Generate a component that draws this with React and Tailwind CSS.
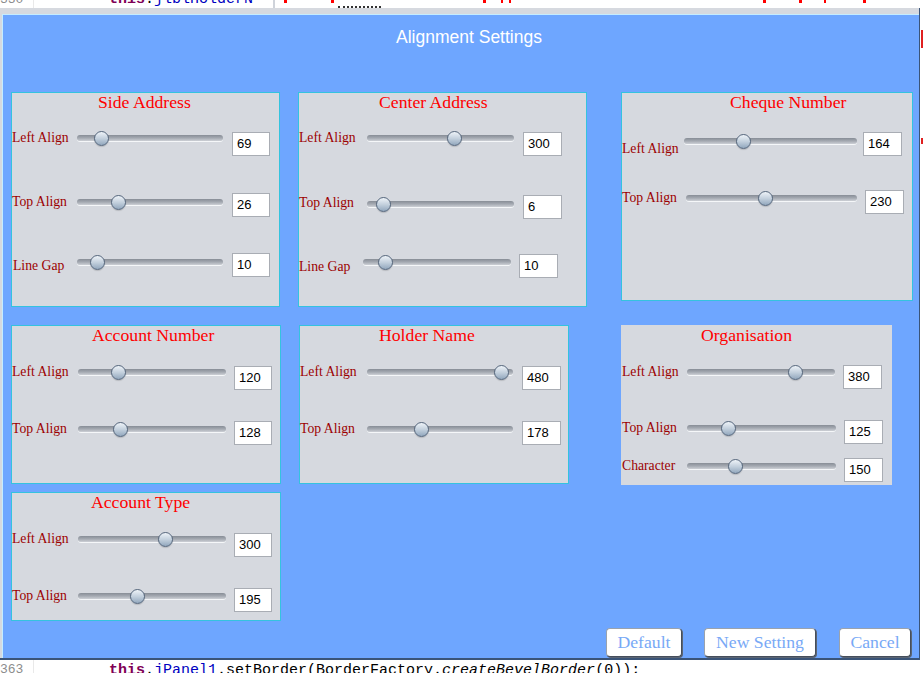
import React from "react";

const SERIF = "font-['Liberation_Serif',serif]";
const MONO = "font-['Liberation_Mono',monospace]";

const panels = {
  side: {
    title: "Side Address",
    cls: "w-[269px] h-[215px] border-[#34c3df]",
    tpl: "pl-[86px]",
    rows: [
      { label: "Left Align", value: "69", mt: "mt-[18px]", lw: "w-[65px]", lmt: "mt-0", sw: "w-[146px]", smt: "mt-0", c: 24.7, bml: "ml-[9px]", bw: "w-[38px]", bmt: "mt-[2px]" },
      { label: "Top Align", value: "26", mt: "mt-[37px]", lw: "w-[65px]", lmt: "mt-[1px]", sw: "w-[146px]", smt: "mt-[1px]", c: 41, bml: "ml-[9px]", bw: "w-[38px]", bmt: "mt-0" },
      { label: "Line Gap", value: "10", mt: "mt-[36px]", lw: "w-[65px] pl-[1px]", lmt: "mt-[5px]", sw: "w-[146px]", smt: "mt-[1px]", c: 20, bml: "ml-[9px]", bw: "w-[38px]", bmt: "mt-0" },
    ],
  },
  center: {
    title: "Center Address",
    cls: "w-[289px] h-[215px] border-[#34c3df]",
    tpl: "pl-[80px]",
    rows: [
      { label: "Left Align", value: "300", mt: "mt-[18px]", lw: "w-[68px]", lmt: "mt-0", sw: "w-[147px]", smt: "mt-0", c: 87, bml: "ml-[9px]", bw: "w-[39px]", bmt: "mt-[2px]" },
      { label: "Top Align", value: "6", mt: "mt-[39px]", lw: "w-[68px]", lmt: "mt-0", sw: "w-[147px]", smt: "mt-[1px]", c: 16, bml: "ml-[9px]", bw: "w-[39px]", bmt: "mt-0" },
      { label: "Line Gap", value: "10", mt: "mt-[35px]", lw: "w-[64px]", lmt: "mt-[5px]", sw: "w-[148px]", smt: "mt-0", c: 22, bml: "ml-[8px]", bw: "w-[39px]", bmt: "mt-0" },
    ],
  },
  cheque: {
    title: "Cheque Number",
    cls: "w-[292px] h-[209px] border-[#34c3df]",
    tpl: "pl-[108px]",
    rows: [
      { label: "Left Align", value: "164", mt: "mt-[20px]", lw: "w-[62px]", lmt: "mt-[9px]", sw: "w-[173px]", smt: "mt-[1px]", c: 59, bml: "ml-[6px]", bw: "w-[39px]", bmt: "mt-0" },
      { label: "Top Align", value: "230", mt: "mt-[33px]", lw: "w-[64px]", lmt: "mt-0", sw: "w-[171px]", smt: "mt-0", c: 79.7, bml: "ml-[8px]", bw: "w-[39px]", bmt: "mt-0" },
    ],
  },
  account: {
    title: "Account Number",
    cls: "w-[270px] h-[159px] border-[#34c3df]",
    tpl: "pl-[80px]",
    rows: [
      { label: "Left Align", value: "120", mt: "mt-[19px]", lw: "w-[66px]", lmt: "mt-0", sw: "w-[148px]", smt: "mt-0", c: 40.7, bml: "ml-[8px]", bw: "w-[38px]", bmt: "mt-[2px]" },
      { label: "Top Align", value: "128", mt: "mt-[31px]", lw: "w-[66px]", lmt: "mt-0", sw: "w-[148px]", smt: "mt-0", c: 42, bml: "ml-[8px]", bw: "w-[38px]", bmt: "mt-0" },
    ],
  },
  holder: {
    title: "Holder Name",
    cls: "w-[270px] h-[159px] ml-[1px] border-[#34c3df]",
    tpl: "pl-[79px]",
    rows: [
      { label: "Left Align", value: "480", mt: "mt-[19px]", lw: "w-[67px]", lmt: "mt-0", sw: "w-[146px]", smt: "mt-0", c: 134, bml: "ml-[9px]", bw: "w-[39px]", bmt: "mt-[2px]" },
      { label: "Top Align", value: "178", mt: "mt-[31px]", lw: "w-[67px]", lmt: "mt-0", sw: "w-[146px]", smt: "mt-0", c: 54.7, bml: "ml-[9px]", bw: "w-[39px]", bmt: "mt-0" },
    ],
  },
  org: {
    title: "Organisation",
    cls: "w-[271px] h-[160px] border-[#d6d9df]",
    tpl: "pl-[79px]",
    rows: [
      { label: "Left Align", value: "380", mt: "mt-[19px]", lw: "w-[65px]", lmt: "mt-0", sw: "w-[148px]", smt: "mt-0", c: 108, bml: "ml-[8px]", bw: "w-[39px]", bmt: "mt-[1px]" },
      { label: "Top Align", value: "125", mt: "mt-[31px]", lw: "w-[65px]", lmt: "mt-0", sw: "w-[149px]", smt: "mt-0", c: 41, bml: "ml-[8px]", bw: "w-[39px]", bmt: "mt-0" },
      { label: "Character", value: "150", mt: "mt-[14px]", lw: "w-[65px]", lmt: "mt-0", sw: "w-[149px]", smt: "mt-0", c: 48, bml: "ml-[8px]", bw: "w-[39px]", bmt: "mt-0" },
    ],
  },
  type: {
    title: "Account Type",
    cls: "w-[270px] h-[129px] border-[#34c3df]",
    tpl: "pl-[79px]",
    rows: [
      { label: "Left Align", value: "300", mt: "mt-[19px]", lw: "w-[66px]", lmt: "mt-0", sw: "w-[148px]", smt: "mt-0", c: 87.7, bml: "ml-[8px]", bw: "w-[38px]", bmt: "mt-[2px]" },
      { label: "Top Align", value: "195", mt: "mt-[31px]", lw: "w-[66px]", lmt: "mt-0", sw: "w-[148px]", smt: "mt-0", c: 59, bml: "ml-[8px]", bw: "w-[38px]", bmt: "mt-0" },
    ],
  },
};

function Slider({ w, mt, c }) {
  return (
    <div className={`relative h-[16px] shrink-0 ${w} ${mt}`}>
      <div className="absolute left-0 right-0 top-[5px] h-[6px] rounded-full bg-linear-to-b from-[#878d96] via-[#a4a9b1] to-[#cdd0d6] shadow-[0_1px_0_#f5f7f9]" />
      <div
        className="absolute top-[0.5px] h-[15px] w-[15px] rounded-full border border-[#55667c] bg-linear-to-b from-[#eef3f8] via-[#c3d0dd] to-[#93a8be] shadow-[0_1px_1px_rgba(0,0,0,0.15)]"
        style={{ left: c - 7.5 }}
      />
    </div>
  );
}

function Row({ r }) {
  return (
    <div className={`flex items-start ${r.mt}`}>
      <div className={`${r.lw} ${r.lmt} shrink-0 whitespace-nowrap text-[13.7px] leading-[16px] text-[#9c0000] ${SERIF}`}>
        {r.label}
      </div>
      <Slider w={r.sw} mt={r.smt} c={r.c} />
      <div
        className={`${r.bml} ${r.bw} ${r.bmt} flex h-[24px] shrink-0 items-center border border-[#a9adb4] bg-white pl-[4px] text-[13px] text-black font-['Liberation_Sans',sans-serif]`}
      >
        {r.value}
      </div>
    </div>
  );
}

function Panel({ p, extra = "" }) {
  return (
    <div className={`flex shrink-0 flex-col border bg-[#d6d9df] ${p.cls} ${extra}`}>
      <div className={`h-[19px] whitespace-nowrap text-[17.7px] leading-[19px] text-[#ff0000] ${SERIF} ${p.tpl}`}>
        {p.title}
      </div>
      {p.rows.map((r, i) => (
        <Row key={i} r={r} />
      ))}
    </div>
  );
}

function Btn({ children, cls }) {
  return (
    <div
      className={`flex h-[29px] items-center justify-center rounded-[4px] border border-[#9aa2ad] border-b-[#454e5c] border-r-[#454e5c] bg-white text-[17.7px] text-[#78a9f6] shadow-[1px_1px_0_#5b6573] ${SERIF} ${cls}`}
    >
      {children}
    </div>
  );
}

export default function App() {
  return (
    <div className="flex h-[673px] w-[923px] flex-col overflow-hidden bg-white">
      {/* IDE top strip (clipped code) */}
      <div className="flex h-[8px] shrink-0 overflow-hidden bg-white">
        <div className="w-[34px] shrink-0 border-r border-[#e9e9e9]">
          <div className={`-mt-[9px] text-[13px] leading-[18px] text-[#8c8c8c] ${MONO}`}>330</div>
        </div>
        <div className="w-[239px] shrink-0 pl-[75px]">
          <div className={`-mt-[9px] whitespace-nowrap text-[15px] leading-[18px] ${MONO}`}>
            <span className="font-bold text-[#7f0055]">this</span>
            <span>.</span>
            <span className="text-[#0000c0]">jlblHolderN</span>
          </div>
        </div>
        <div className="w-[2px] shrink-0 bg-[#cfd3da]" />
        <div className="flex flex-1 items-start">
          <div className="ml-[9px] h-[3px] w-[3px] bg-[#ff0000]" />
          <div className="ml-[44px] h-[3px] w-[3px] bg-[#ff0000]" />
          <div className="ml-[4px] mt-[6px] h-[2px] w-[43px] border-t-2 border-dotted border-[#333]" />
          <div className="ml-[102px] h-[3px] w-[3px] bg-[#ff0000]" />
          <div className="ml-[15px] h-[3px] w-[2px] bg-[#ff0000]" />
          <div className="ml-[6px] h-[3px] w-[2px] bg-[#ff0000]" />
          <div className="ml-[252px] h-[3px] w-[3px] bg-[#ff0000]" />
          <div className="ml-[33px] h-[3px] w-[3px] bg-[#ff0000]" />
          <div className="ml-[22px] h-[3px] w-[2px] bg-[#ff0000]" />
          <div className="ml-[37px] h-[3px] w-[3px] bg-[#ff0000]" />
        </div>
      </div>

      {/* dialog row */}
      <div className="flex h-[652px] shrink-0">
        <div className="flex w-[920px] shrink-0 flex-col border-b-2 border-r border-[#3a5478] bg-[#d6d9df] pl-[2px] pt-[6px]">
          <div className="flex flex-1 flex-col border-l border-t border-[#c4ecff] bg-[#6ea6ff]">
            <div className="pt-[12px]">
              <div className="h-[20px] pl-[16px] text-center text-[17.5px] leading-[20px] text-white font-['Liberation_Sans',sans-serif]">
                Alignment Settings
              </div>
            </div>

            <div className="ml-[8px] mt-[45px] flex items-start">
              <div className="flex w-[270px] shrink-0 flex-col">
                <Panel p={panels.side} />
                <Panel p={panels.account} extra="mt-[18px]" />
                <Panel p={panels.type} extra="mt-[8px]" />
              </div>
              <div className="ml-[17px] flex shrink-0 flex-col">
                <Panel p={panels.center} />
                <Panel p={panels.holder} extra="mt-[18px]" />
              </div>
              <div className="ml-[34px] flex shrink-0 flex-col">
                <Panel p={panels.cheque} />
                <Panel p={panels.org} extra="mt-[24px]" />
              </div>
            </div>

            <div className="mt-[7px] flex justify-end pr-[8px]">
              <Btn cls="w-[76px]">Default</Btn>
              <Btn cls="ml-[22px] w-[112px]">New Setting</Btn>
              <Btn cls="ml-[23px] w-[72px]">Cancel</Btn>
            </div>
          </div>
        </div>
        <div className="flex w-[3px] shrink-0 flex-col bg-white">
          <div className="ml-[1px] mt-[22px] h-[18px] w-[2px] bg-[#e02020]" />
          <div className="ml-[1px] mt-[90px] h-[6px] w-[2px] bg-[#e02020]" />
        </div>
      </div>

      {/* IDE bottom strip */}
      <div className="flex h-[13px] shrink-0 overflow-hidden bg-white">
        <div className="w-[34px] shrink-0 border-r border-[#e9e9e9]">
          <div className={`mt-[1px] text-[13px] leading-[18px] text-[#8c8c8c] ${MONO}`}>363</div>
        </div>
        <div className="flex-1 pl-[75px]">
          <div className={`mt-[2px] whitespace-nowrap text-[15px] leading-[18px] text-black ${MONO}`}>
            <span className="font-bold text-[#7f0055]">this</span>
            <span>.</span>
            <span className="text-[#0000c0]">jPanel1</span>
            <span>.setBorder(BorderFactory.</span>
            <span className="italic">createBevelBorder</span>
            <span>(0));</span>
          </div>
        </div>
      </div>
    </div>
  );
}
